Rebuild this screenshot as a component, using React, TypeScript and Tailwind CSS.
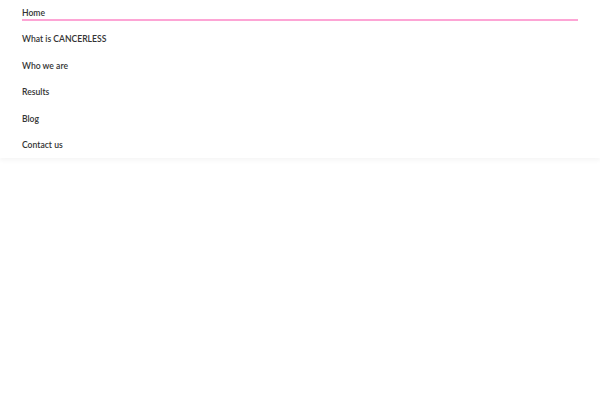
const items = ['Home', 'What is CANCERLESS', 'Who we are', 'Results', 'Blog', 'Contact us'];

export default function App() {
  return (
    <div className="min-h-[400px] bg-white" style={{ fontFamily: 'Lato, "Noto Sans", sans-serif' }}>
      <nav className="bg-white px-[22px] shadow-[0_3px_4px_rgba(0,0,0,0.035)]">
        <ul className="flex flex-col">
          {items.map((item, i) => (
            <li key={item} className="h-[26.4px] pt-[8px]">
              <a href="#" className="block text-[8.6px] font-semibold leading-[10px] text-[#333333]">
                {item}
              </a>
              {i === 0 && <div className="mt-px h-[1.5px] bg-pink-300" />}
            </li>
          ))}
        </ul>
      </nav>
    </div>
  );
}
